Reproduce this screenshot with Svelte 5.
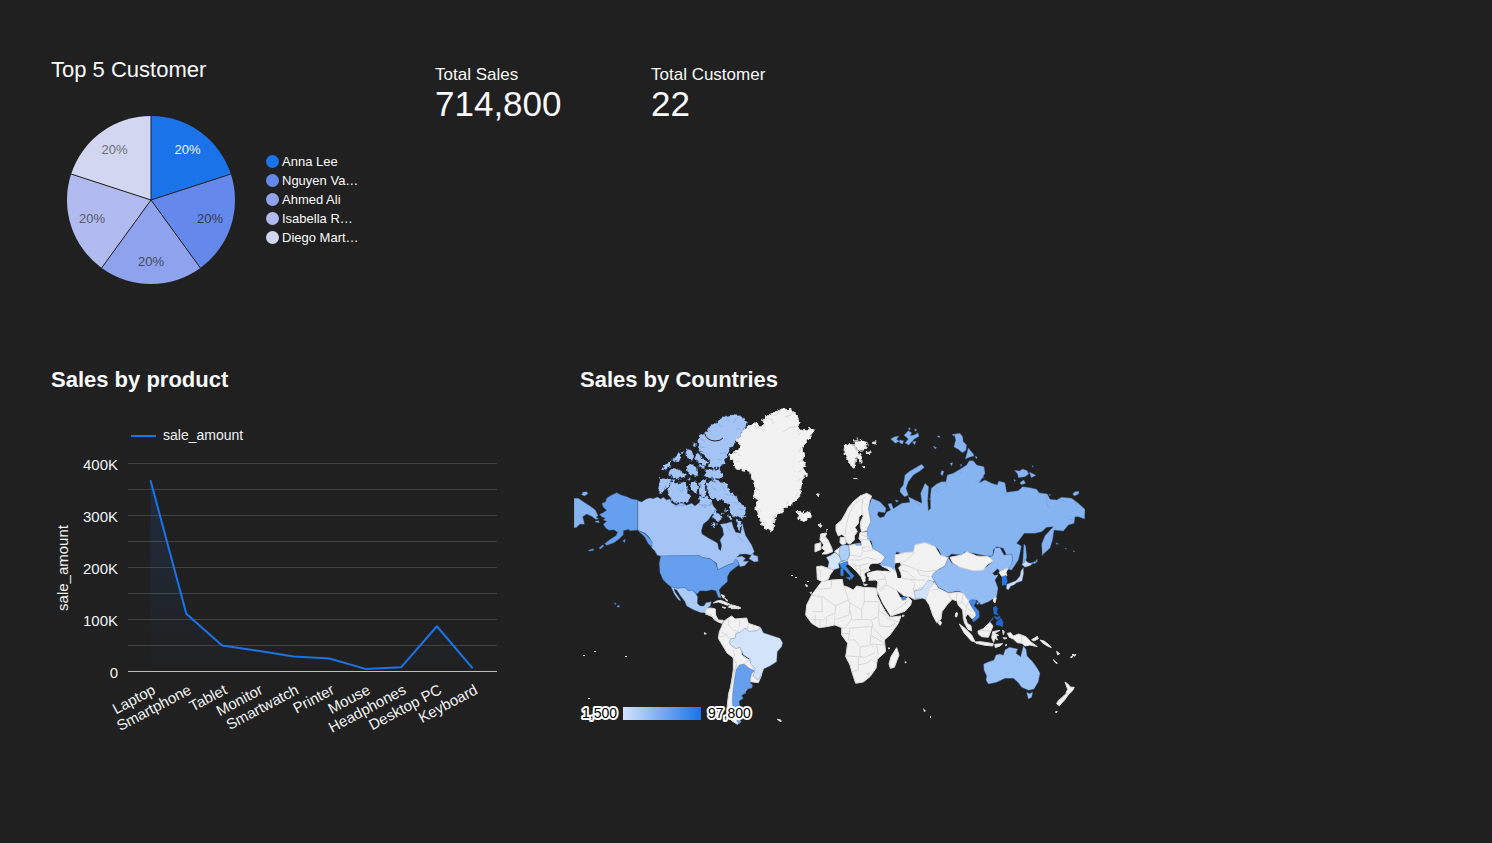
<script>
  const customers = [
    { name: 'Anna Lee', color: '#1a73e8', ink: '#f1f3f4' },
    { name: 'Nguyen Va…', color: '#6589ea', ink: '#333a4d' },
    { name: 'Ahmed Ali', color: '#8fa2ed', ink: '#414a5c' },
    { name: 'Isabella R…', color: '#b1bbef', ink: '#555a68' },
    { name: 'Diego Mart…', color: '#d3d6f0', ink: '#6c6e76' }
  ];
  const kpis = [
    { label: 'Total Sales', value: '714,800' },
    { label: 'Total Customer', value: '22' }
  ];

  const rad = (turn) => (turn * 2 - 0.5) * Math.PI;
  const at = (turn, r) => [86 + r * Math.cos(rad(turn)), 86 + r * Math.sin(rad(turn))];
  const slices = customers.map((c, i) => {
    const [x1, y1] = at(i / 5, 84);
    const [x2, y2] = at((i + 1) / 5, 84);
    const [tx, ty] = at((i + 0.5) / 5, 62);
    return { ...c, tx, ty, d: `M86 86L${x1} ${y1}A84 84 0 0 1 ${x2} ${y2}Z` };
  });

  const products = [
    ['Laptop', 368], ['Smartphone', 111], ['Tablet', 50], ['Monitor', 40], ['Smartwatch', 29],
    ['Printer', 25], ['Mouse', 5], ['Headphones', 8], ['Desktop PC', 87], ['Keyboard', 6]
  ];
  const scaleY = (v) => 251.5 - v * 0.52;
  const points = products.map(([name, v], i) => ({ name, x: 99.5 + i * 35.8, y: scaleY(v) }));
  const line = points.map((p) => `${p.x},${p.y}`).join(' ');
  const area = `${points[0].x},251 ${line} ${points[9].x},251`;
  const ticks = [400, 350, 300, 250, 200, 150, 100, 50];

  const land = '#f2f2f2';
  const russia = '#86b4f1';
  const canada = '#a3c4f5';
  const usa = '#659fee';

  // Each sheet of the map has its own origin; three units make one pixel.
  const sheets = [
    { x: -4, y: -4, rough: false, shapes: [
      [canada, 'M203 302L215 306 228 298 240 294 250 296 262 291 272 297 280 292 290 300 300 297 304 308 318 316 335 308 350 316 365 310 375 318 390 306 400 314 412 300 425 305 430 318 440 330 425 345 415 360 400 372 394 392 396 402 415 414 430 422 443 430 446 447 452 452 455 436 450 420 461 405 458 385 450 373 470 370 485 365 490 382 497 397 512 400 517 370 522 390 527 407 545 435 553 455 545 466 528 462 510 463 500 472 515 468 526 475 520 484 536 484 524 497 510 500 503 482 490 490 475 494 443 510 440 490 420 476 395 472 390 467 272 468 262 466 254 452 245 443 246 428 238 412 225 400 203 390Z'],
      [canada, 'M537 476L548 460 552 466 563 468 565 484 553 486Z'],
      [usa, 'M272 468L390 467 395 472 420 476 438 490 443 510 475 494 490 490 495 478 503 480 507 495 495 503 480 515 472 530 472 545 455 560 447 570 452 585 453 594 445 592 438 572 425 569 410 573 390 572 382 582 375 578 365 570 355 573 345 563 320 565 303 560 292 552 280 540 270 518 268 490Z'],
      [usa, 'M203 300L185 297 170 290 155 286 140 278 120 288 110 295 107 306 96 310 100 322 110 330 100 338 89 343 96 351 106 354 100 360 110 364 100 373 108 385 118 391 132 389 143 397 138 407 121 418 104 431 110 436 132 428 148 416 160 404 160 392 175 388 181 392 203 390 222 400 234 410 247 425 245 441 234 430 225 412 206 394 203 390Z'],
      [usa, 'M87 444L98 435 102 438 91 447ZM54 452L63 448 70 446 71 451 61 453ZM133 608L139 611 136 614ZM141 618L148 615 148 622 142 621ZM158 423L166 417 164 428Z'],
      ['#a9cbf6', 'M303 560L320 565 345 563 355 573 365 570 375 578 383 590 382 610 390 618 402 618 408 608 424 605 421 618 411 625 405 638 393 638 372 630 350 618 345 605 332 588 320 570 312 566 315 576 322 586 333 602 326 600 314 584Z'],
      [land, 'M405 637L411 625 423 624 436 627 437 645 445 660 460 661 455 670 440 664 427 650 412 644ZM430 609L440 603 452 601 465 606 480 613 472 616 460 611 445 606ZM475 622L482 614 495 617 512 624 505 627 492 624ZM456 621L468 623 464 625ZM455 584L464 588 461 593ZM464 594L474 602 470 603Z'],
      [russia, 'M12 295L25 295 40 305 60 318 76 330 84 347 78 351 86 357 77 358 65 349 50 342 38 350 42 365 43 373 30 372 20 382 12 384ZM35 284L38 277 50 275 54 281 43 288ZM75 364L86 362 88 368 79 367Z']
    ] },
    { x: -4, y: -4, rough: true, shapes: [
      [canada, 'M404 98L420 78 445 62 460 50 480 45 510 47 522 55 530 70 525 85 515 97 500 120 490 135 478 150 472 170 462 190 452 203 430 205 415 195 420 180 410 175 395 160 385 145 383 120 388 105Z'],
      [canada, 'M408 209L450 207 459 220 454 236 420 235 402 227ZM348 146L362 150 372 165 370 182 355 178 347 165ZM370 128L377 130 376 142 369 138ZM380 158L395 165 397 178 415 185 408 195 385 190 375 173ZM350 200L365 193 382 200 384 228 365 226 352 214ZM310 175L325 160 333 166 327 187 308 182ZM290 188L305 183 301 200 286 213 275 207ZM302 204L320 206 335 215 350 223 343 232 315 238 295 222Z'],
      [canada, 'M269 234L290 238 305 240 298 255 285 265 274 283 263 272 269 250ZM309 241L325 250 345 245 353 260 352 280 362 290 352 308 325 311 303 299 293 275 300 256ZM365 245L378 242 384 258 379 282 364 272 357 255ZM391 240L409 238 405 265 409 290 392 287 387 262ZM383 292L410 291 426 302 418 318 395 318Z'],
      [canada, 'M413 247L440 242 462 247 475 258 480 278 500 290 508 308 528 322 526 345 515 360 504 345 491 352 480 335 478 317 459 300 440 300 420 290 410 268ZM436 327L446 344 459 353 445 366 427 354ZM474 343L485 352 479 361ZM498 356L516 365 512 391 500 379ZM465 324L475 333 467 337Z'],
      [canada, 'M330 152L342 156 338 162ZM386 196L402 196 404 206 388 204ZM352 238L362 236 358 242ZM420 236L440 237 432 243ZM455 335L462 340 456 345ZM430 366L440 372 434 382 426 376Z']
    ] },
    { x: 156, y: -4, rough: true, shapes: [
      [land, 'M135 36L160 27 185 30 200 45 210 68 203 80 215 91 230 92 240 85 253 95 240 110 232 125 221 135 217 150 224 165 217 180 226 190 222 205 229 225 216 240 213 262 212 290 195 305 180 318 165 320 158 335 140 345 132 360 130 385 125 393 105 385 95 372 85 345 78 325 82 300 72 285 75 260 65 235 57 213 40 210 20 208 10 195 15 185 0 175 0 165 25 150 30 135 20 120 38 95 53 78 75 68 92 80 103 76 98 60 115 45Z'],
      [land, 'M198 335L209 334 218 339 235 333 245 346 235 358 221 364 203 354 208 346ZM343 138L358 133 372 135 380 150 397 178 392 190 380 168 372 200 364 202 350 170 342 158ZM372 123L400 121 412 131 403 150 385 151 374 137Z'],
      [land, 'M427 128L438 125 434 132ZM408 158L424 155 416 161ZM400 200L405 202 401 204ZM374 234L379 237 375 238ZM262 283L268 282 265 287ZM268 372L273 376 270 381ZM290 388L294 390 291 393ZM382 114L386 116 382 118Z']
    ] },
    { x: 226, y: 76, rough: false, shapes: [
      [land, 'M200 40L215 48 208 65 207 85 213 125 205 150 185 155 181 140 182 125 190 108 185 102 177 112 175 130 165 142 172 155 163 168 163 180 156 187 148 193 140 187 135 170 125 163 115 168 108 152 108 135 125 120 138 97 145 83 160 65 180 48Z'],
      [land, 'M180 158L205 155 205 175 218 205 240 215 255 228 250 245 235 250 218 250 208 258 212 270 198 277 192 282 200 300 190 307 183 290 170 275 155 260 142 250 118 248 120 241 142 240 150 225 146 197 165 192 183 196 185 186 177 176Z'],
      [russia, 'M167 190L182 188 184 195 168 196Z'],
      [land, 'M121 172L135 173 138 190 128 195 120 188ZM62 162L80 159 76 170 84 180 95 203 98 215 80 222 66 222 76 213 65 204 72 195 60 180ZM45 193L62 188 63 208 45 216ZM104 214L120 202 120 230Z'],
      ['#aed0f8', 'M120 199L132 194 146 196 149 225 142 240 122 243 117 222Z'],
      ['#d2e5fb', 'M79 232L92 226 105 217 118 228 124 243 116 250 118 264 100 270 83 264 87 246Z'],
      ['#3a8aeb', 'M118 248L130 242 144 244 144 252 137 258 150 275 162 287 155 298 149 286 134 270 122 262ZM138 292L153 292 150 301ZM122 266L129 264 130 287 122 287Z'],
      [land, 'M50 260L65 258 82 264 100 271 90 285 85 298 68 305 52 298ZM190 312L202 314 195 317ZM236 309L244 307 240 312ZM52 41L57 43 53 46ZM17 313L22 318 18 317Z']
    ] },
    { x: 286, y: 16, rough: false, shapes: [
      [russia, 'M35 235L60 245 78 265 75 278 55 275 52 285 60 293 72 290 80 276 92 270 84 252 94 250 100 266 125 250 150 247 145 230 165 240 186 250 182 220 195 190 206 200 203 240 205 272 212 265 211 230 214 205 230 192 245 185 258 185 262 165 280 160 300 148 320 135 328 122 340 122 350 135 372 140 375 160 358 188 375 180 395 190 412 195 416 183 435 188 440 217 475 212 488 200 510 203 530 208 537 218 562 222 570 238 590 240 605 232 635 235 655 250 675 268 674 297 655 290 645 290 642 310 625 315 610 333 582 330 578 358 570 384 547 405 545 372 555 347 580 320 560 322 545 335 525 340 493 340 470 370 484 378 480 400 475 420 455 450 442 448 458 420 455 402 440 405 430 385 410 380 400 390 398 408 380 408 350 402 315 395 305 405 275 402 265 410 245 408 235 388 225 380 195 370 165 378 160 395 135 405 110 395 104 410 112 440 105 462 80 445 58 435 76 412 60 398 38 385 35 365 22 355 22 325 33 305 25 265Z'],
      [russia, 'M185 133L193 142 180 153 160 165 145 185 138 205 145 226 133 230 120 215 121 206 130 195 135 165 150 153ZM283 76L287 60 283 42 300 40 308 50 310 65 320 75 318 91 307 98 295 88 282 81ZM325 84L340 102 342 108 328 112 316 117ZM345 108L352 112 349 117Z'],
      [russia, 'M463 151L478 153 488 147 502 152 506 162 495 170 475 173 473 162ZM508 156L528 166 514 173ZM480 188L491 180 497 190 484 194ZM462 178L468 182 463 184ZM638 222L645 215 657 214 656 222 643 228ZM492 372L497 378 500 410 495 437 488 432 490 400ZM516 137L521 138 517 141ZM568 222L572 224 569 227Z'],
      [russia, 'M92 57L104 50 117 48 110 58 118 64 106 70ZM118 60L131 62 128 72 119 69ZM132 46L145 32 155 38 151 47 165 44 174 38 177 49 163 57 154 67 146 75 135 69 145 57ZM145 24L152 25 148 31ZM163 27L171 29 166 34ZM157 65L168 64 164 75ZM231 48L240 48 238 53ZM219 78L230 83 226 87ZM270 130L278 128 275 138ZM301 134L305 132 303 140ZM276 43L286 43 281 49ZM245 152L252 154 247 168 242 161ZM105 240L116 242 110 247Z'],
      [russia, 'M545 402L549 404 547 407ZM527 421L532 418 530 424ZM513 428L525 425 515 433ZM503 438L509 431 508 437ZM588 368L596 372 590 373ZM615 384L620 386 616 387ZM640 392L645 394 641 396Z'],
      [land, 'M37 70L48 65 46 72ZM18 100L34 96 29 101ZM10 140L15 141 12 144Z']
    ] },
    { x: 306, y: 126, rough: false, shapes: [
      [land, 'M-38 130L-10 121 20 124 32 126 25 117 5 108 30 112 52 128 58 144 66 142 55 112 62 104 45 98 45 75 75 68 100 66 105 45 135 38 165 50 180 75 205 83 195 108 175 118 160 132 165 152 148 160 125 205 103 208 90 200 72 198 48 178 60 202 72 209 84 202 95 212 92 225 75 244 30 259 7 220 -5 190 -10 180 -6 156 -12 150 -35 151Z'],
      ['#93bcf5', 'M205 83L215 98 240 112 280 122 310 118 340 92 325 80 338 78 345 53 360 53 372 75 395 72 398 90 390 113 375 120 360 125 353 116 338 130 343 136 355 134 345 150 354 174 350 200 325 215 303 224 290 210 265 213 250 190 235 183 205 188 175 172 155 140 160 131 175 119 195 108Z'],
      [land, 'M210 82L245 75 260 65 290 78 325 80 340 92 320 105 310 120 280 122 240 112 218 98Z'],
      ['#cfe2fa', 'M103 183L125 178 145 150 162 155 155 175 143 195 140 210 125 205 105 205Z'],
      [land, 'M150 175L163 157 175 175 205 190 235 187 240 200 228 212 217 208 203 222 186 245 183 268 170 278 158 255 148 225 138 210 142 195ZM176 269L185 277 181 286 175 281Z'],
      [land, 'M232 186L250 190 262 208 272 215 272 226 289 250 287 262 276 266 263 252 256 262 262 280 273 287 275 303 264 298 254 280 250 265 248 240 235 226 229 208Z'],
      ['#4285e8', 'M266 214L278 208 290 213 282 227 297 244 298 262 281 276 276 270 288 258 287 248 276 232Z'],
      [land, 'M357 127L372 119 384 114 378 128 381 137 366 140Z'],
      ['#2576e8', 'M366 140L378 136 382 155 377 165 366 166Z'],
      ['#c8dcf5', 'M425 103L435 97 433 88 445 98 456 100 453 106 435 112ZM430 113L431 130 426 153 410 158 402 165 393 168 385 180 379 176 380 163 396 157 408 152 420 138 423 122Z'],
      ['#86b4f1', 'M458 100L463 95 474 92 464 101Z'],
      ['#1a69d8', 'M340 233L347 228 353 235 350 245 355 255 342 252ZM342 258L352 262 360 257 360 264 351 270ZM349 276L363 265 369 277 368 290 358 286 349 285ZM327 277L340 262 338 269Z'],
      [land, 'M342 203L349 203 345 219 340 213ZM228 249L233 250 230 260 226 258ZM68 255L73 257 68 260Z'],
      ['#93bcf5', 'M289 218L298 217 293 225Z'],
      ['#4d8fec', 'M64 203L76 199 77 209 67 211Z']
    ] },
    { x: 221, y: 156, rough: false, shapes: [
      [land, 'M80 65L110 60 142 58 145 77 160 82 175 90 185 78 205 82 242 84 248 105 258 130 270 153 284 172 318 168 310 190 285 225 268 240 272 275 247 298 243 325 225 350 205 366 182 370 172 340 165 315 152 290 158 250 140 225 140 203 120 195 95 200 72 203 50 190 32 165 35 135 50 105 65 85Z'],
      [land, 'M305 263L312 285 298 322 286 325 282 312 288 290ZM33 75L38 78 34 80ZM45 98L49 96 48 101ZM330 305L334 307 331 309ZM281 263L285 265 281 267Z']
    ] },
    { x: 376, y: 186, rough: false, shapes: [
      [land, 'M28 102L45 115 65 135 75 155 64 153 42 128ZM74 156L90 155 105 157 130 161 128 168 105 166 78 160ZM134 163L158 161 150 168 136 173ZM84 123L100 116 120 97 129 108 122 125 115 142 95 140 85 132ZM128 125L150 121 134 130 146 136 138 139 143 150 135 145 131 157 125 143Z'],
      [land, 'M172 130L182 128 190 138 206 132 228 140 242 155 262 170 240 165 225 168 216 160 202 158 190 147 178 142ZM245 149L262 139 265 146 252 153ZM158 120L163 126 160 134ZM159 143L171 144 164 147ZM270 150L282 153 295 163 304 173 292 168 277 158ZM166 165L170 163 168 168ZM17 70L21 68 20 81 16 80Z'],
      ['#9cc3f6', 'M101 222L115 216 132 210 138 195 150 192 160 196 165 180 178 172 203 177 198 190 212 200 220 168 228 178 231 198 248 215 262 235 270 250 265 275 252 297 236 301 215 292 205 278 190 265 165 265 140 277 115 282 108 270 110 258 102 240ZM230 307L239 311 248 306 245 322 235 327Z'],
      [land, 'M345 276L356 284 360 291 373 292 367 303 355 314 348 309 353 298ZM350 309L355 314 344 330 328 347 320 341 325 332 342 317ZM310 209L322 220 318 220ZM320 184L329 191 323 195ZM361 202L370 196 366 203ZM370 196L378 193 374 199ZM317 365L322 365 318 369Z']
    ] },
    { x: 116, y: 186, rough: false, shapes: [
      [land, 'M100 95L112 86 125 78 135 87 170 84 175 100 190 105 210 112 215 125 195 130 155 140 155 195 192 220 215 255 205 278 180 275 170 300 150 320 135 350 137 375 152 395 142 403 125 392 110 370 112 345 116 310 122 290 130 240 130 203 112 190 100 170 85 145 88 125 95 110Z'],
      ['#d2e3fa', 'M118 158L122 146 135 145 138 130 150 127 165 114 178 124 200 122 212 112 220 128 240 135 270 145 278 158 275 170 262 185 260 215 240 228 222 236 215 255 203 270 190 258 195 235 182 222 180 208 160 195 150 172 138 176 125 168Z'],
      [usa, 'M148 225L162 222 178 235 193 242 185 250 181 265 180 278 188 285 186 294 165 299 168 310 153 315 160 325 147 334 150 350 140 365 130 355 127 340 128 310 133 270 138 240ZM140 390L154 395 146 402Z'],
      [land, 'M43 128L49 131 44 133ZM262 388L272 390 273 395ZM123 56L146 50 152 54 135 56ZM95 15L103 20 100 25Z']
    ] }
  ];

  // Country borders that lie over the filled land.
  const borders = [
    [221, 156, 'M110 62L108 85 65 88M50 105L80 112 82 155 50 155M80 108L122 138 160 120 148 80M160 120L165 130 162 165 125 178M208 82L208 125 252 125M208 125L200 150 165 128M122 138L120 160 95 170 85 180 50 178M120 165L118 195M95 172L92 200M75 180L75 202M165 150L170 175 150 205 140 205M170 180L200 178 230 180 250 170 252 130M200 150L200 178M250 150L275 168M275 175L310 185M250 172L255 198 285 200 300 190M230 182L235 205 268 238M165 205L195 202 230 200 228 225 225 250 235 262M165 205L160 240 180 240 195 262 225 255M155 288L195 290 195 262M228 225L268 250M225 252L268 255M245 255L250 285M195 290L210 292 240 278M190 292L190 330 170 335M190 315L215 310 230 298 243 310M215 342L222 338 222 345 215 342M140 220L165 222M62 165L60 190'],
    [116, 186, 'M115 88L115 105 130 120 148 125M150 88L148 110M175 100L172 118M190 105L190 120M92 125L110 135 120 148M88 140L100 140 112 130M130 180L135 200M130 203L140 225 135 245M162 222L180 208M182 222L192 238M190 258L183 262M138 225L122 290M45 72L60 75M60 70L75 92M70 85L85 92'],
    [226, 76, 'M200 50L190 55 185 80 188 105M165 70L150 95 140 130 135 165M190 55L165 70M185 165L205 172M180 178L208 180M150 225L180 230 190 215 218 210M185 196L190 215M150 240L180 240 200 232 230 240M155 250L175 258 205 250M165 255L170 275M180 258L182 285M55 270L62 272 62 296M185 270L205 268M65 165L76 178M118 250L145 240M210 205L200 200 185 205'],
    [306, 126, 'M62 104L75 105 110 118 140 125 175 120M64 120L80 125 110 150 135 150M110 118L120 135 150 140M66 145L90 148 105 160 100 180 105 205M90 148L110 150M105 180L130 170 145 150M0 125L15 140 20 165 45 180M-10 150L15 148M15 165L-5 180M20 165L0 185M40 245L70 225 85 210M155 180L175 178M205 195L215 208M250 192L245 215 262 235M262 235L280 245M245 215L235 225M105 66L80 90 64 100M265 215L258 235 255 258M262 250L282 258'],
    [376, 186, 'M90 122L118 122M215 137L216 158']
  ];
  const fjords = 'M55 84L65 95M75 74L80 88M92 84L100 94M110 54L125 58 130 72M150 34L135 48M190 42L165 52M203 78L180 82 160 95M213 98L205 105M214 142L208 155M215 178L207 188M218 208L205 217M215 234L203 243M24 162L35 168M16 186L30 184M74 262L85 270M80 292L90 300M86 325L95 335M99 367L110 372M195 290L205 278M170 314L175 303M137 341L127 353';
  const inlets = 'M225 197L238 208M222 207L236 220M207 235L210 240M260 180L257 200M345 190L370 172M368 165L372 175M440 218L425 230M560 226L560 250 568 265M300 152L305 162M165 244L180 258M602 238L620 248M640 300L625 298M520 335L540 325M440 405L460 402';
  const icefields = 'M415 88L425 98M440 68L455 80M470 54L480 66M500 52L490 70M510 88L498 86M392 115L405 125M390 140L405 143M468 158L450 160M455 180L443 178M425 262L440 270M455 255L465 272M475 285L465 282M502 310L490 307M518 330L505 326M320 262L332 272M340 260L335 280M312 318L345 316M360 318L368 325M470 375L480 395M500 405L520 425';
</script>

<main class="report">
  <section class="top">
    <article>
      <h2 class="light">Top 5 Customer</h2>
      <div class="pie">
        <svg viewBox="0 0 172 172" role="img" aria-label="Top 5 Customer">
          {#each slices as s}
            <path d={s.d} fill={s.color} />
          {/each}
          {#each slices as s}
            <path d={s.d.split('A')[0]} class="divider" />
            <text x={s.tx} y={s.ty + 4} fill={s.ink} text-anchor="middle" class="pct">20%</text>
          {/each}
        </svg>
        <ul>
          {#each customers as c}
            <li><span class="dot" style:background={c.color}></span>{c.name}</li>
          {/each}
        </ul>
      </div>
    </article>
    {#each kpis as k}
      <dl>
        <dt>{k.label}</dt>
        <dd>{k.value}</dd>
      </dl>
    {/each}
  </section>

  <section class="bottom">
    <article>
      <h2>Sales by product</h2>
      <svg class="chart" viewBox="0 0 449 320" role="img" aria-label="Sales by product">
        <defs>
          <linearGradient id="fade" x1="0" y1="0" x2="0" y2="1">
            <stop offset="0" stop-color="#1a73e8" stop-opacity=".16" />
            <stop offset="1" stop-color="#1a73e8" stop-opacity="0" />
          </linearGradient>
        </defs>
        <path d="M80 16H105" class="series" />
        <text x="112" y="20" class="key">sale_amount</text>
        {#each ticks as t}
          <path d="M77 {Math.ceil(scaleY(t)) - 0.5}H446" class="grid" />
        {/each}
        {#each [400, 300, 200, 100, 0] as t}
          <text x="67" y={scaleY(t) + 6} text-anchor="end">{t ? `${t}K` : '0'}</text>
        {/each}
        <text transform="translate(17 148) rotate(-90)" text-anchor="middle">sale_amount</text>
        <polygon points={area} fill="url(#fade)" />
        <path d="M77 251.5H446" class="axis" />
        <polyline points={line} class="series" />
        {#each points as p}
          <text transform="translate({p.x + 6} 273) rotate(-28)" text-anchor="end">{p.name}</text>
        {/each}
      </svg>
    </article>

    <article>
      <h2 class="inset">Sales by Countries</h2>
      <svg class="map" viewBox="0 0 511 322" role="img" aria-label="Sales by Countries">
        <defs>
          <filter id="coast" x="-5%" y="-5%" width="110%" height="110%" color-interpolation-filters="sRGB">
            <feTurbulence type="fractalNoise" baseFrequency=".28" numOctaves="2" seed="4" />
            <feDisplacementMap in="SourceGraphic" scale="5" xChannelSelector="R" yChannelSelector="G" />
          </filter>
          <linearGradient id="ramp">
            <stop offset="0" stop-color="#d2e3fc" />
            <stop offset="1" stop-color="#1a73e8" />
          </linearGradient>
        </defs>
        {#each sheets as s}
          <g filter={s.rough ? 'url(#coast)' : null}>
            <g transform="translate({s.x} {s.y}) scale(.3333)">
              {#each s.shapes as [fill, d]}
                <path {d} {fill} class={fill === land ? 'plain' : 'valued'} />
              {/each}
            </g>
          </g>
        {/each}
        {#each borders as [x, y, d]}
          <path {d} transform="translate({x} {y}) scale(.3333)" class="border" />
        {/each}
        <path d={fjords} transform="translate(156 -4) scale(.3333)" class="border" />
        <path d={inlets} transform="translate(286 16) scale(.3333)" class="inlet" />
        <path d={icefields} transform="translate(-4 -4) scale(.3333)" class="inlet" />
        <path d="M404 100Q410 122 435 123 452 123 459 114M440 325L450 338 470 340" transform="translate(-4 -4) scale(.3333)" class="channel" />
        <path
          d="M206 264L213 252 224 258 231 254 240 256 256 268 250 272 232 271 214 274ZM287 250L300 248 302 256 294 264 301 278 303 294 293 294 289 276 284 260ZM147 258L162 272 174 287 171 296 160 281 149 268ZM198 290L206 291 205 308 196 300Z"
          transform="translate(226 76) scale(.3333)"
          class="sea"
        />
        <path d="M248 104L262 132 285 168" transform="translate(221 156) scale(.3333)" class="channel" />
        <g fill={land}>
          <path d="M9 251h2v1h-2zM20 247h2v1h-2zM51 252h2v1h-2zM14 294h2v1h-2zM217 171h2v1h-2zM221 173h2v1h-2zM233 177h2v1h-2zM349 304l3 3-2 1zM356 312h1v2h-1zM204 315l4 2-2 1zM498 250h2v1h-2z" />
        </g>
        <rect x="49" y="303" width="78" height="13" fill="url(#ramp)" />
        <text x="8" y="314" class="range">1,500</text>
        <text x="134" y="314" class="range">97,800</text>
      </svg>
    </article>
  </section>
</main>

<style>
  :global(body) {
    margin: 0;
    background: #202020;
  }
  .report {
    box-sizing: border-box;
    min-height: 100vh;
    padding: 55px 0 54px 51px;
    color: #f8f9fa;
    font-family: 'Liberation Sans', Arial, sans-serif;
  }
  .top {
    display: grid;
    grid-template-columns: 384fr 216fr 841fr;
    margin-bottom: 79px;
  }
  .bottom {
    display: grid;
    grid-template-columns: 523fr 918fr;
  }
  h2 {
    margin: 0;
    font-size: 22px;
    line-height: 30px;
  }
  .light {
    font-weight: 400;
  }
  .inset {
    padding-left: 6px;
  }
  .pie {
    display: flex;
    align-items: center;
    gap: 29px;
    padding: 29px 0 0 14px;
  }
  .pie svg {
    width: 172px;
  }
  .pct,
  ul {
    font-size: 13px;
  }
  .divider {
    stroke: #202020;
    stroke-width: 1;
  }
  ul {
    margin: 0 0 2px;
    padding: 0;
    list-style: none;
    line-height: 19px;
  }
  li {
    display: flex;
    align-items: center;
    gap: 3px;
  }
  .dot {
    width: 13px;
    height: 13px;
    border-radius: 50%;
  }
  dl {
    margin: 10px 0 0;
  }
  dt {
    font-size: 17px;
    line-height: 20px;
  }
  dd {
    margin: 0;
    font-size: 35px;
    line-height: 38px;
  }
  svg {
    display: block;
  }
  .chart {
    width: 100%;
    max-width: 449px;
    margin-top: 25px;
    fill: #f1f3f4;
    font-size: 15px;
  }
  .key {
    font-size: 14px;
  }
  .grid {
    stroke: #424242;
  }
  .axis {
    stroke: #bdbdbd;
  }
  .series {
    fill: none;
    stroke: #1a73e8;
    stroke-width: 2;
    stroke-linejoin: round;
  }
  .map {
    width: 100%;
    max-width: 511px;
    margin-top: 9px;
  }
  .plain,
  .valued,
  .border,
  .inlet,
  .channel {
    stroke-width: 3;
    stroke-linejoin: round;
  }
  .plain {
    stroke: #dadada;
  }
  .valued {
    stroke: rgba(70, 110, 170, 0.4);
  }
  .border,
  .inlet,
  .channel {
    fill: none;
  }
  .border {
    stroke: #d8d8d8;
  }
  .inlet {
    stroke: #769dd4;
    opacity: 0.6;
  }
  .channel {
    stroke: #202020;
  }
  .sea {
    fill: #202020;
  }
  .range {
    fill: #000;
    stroke: #fff;
    stroke-width: 4;
    stroke-linejoin: round;
    paint-order: stroke;
    font-size: 14px;
  }
</style>
